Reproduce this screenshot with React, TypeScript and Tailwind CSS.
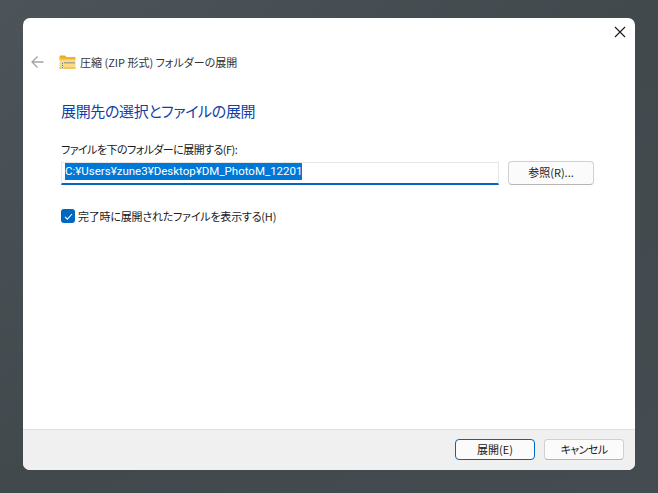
const font = { fontFamily: '"Noto Sans CJK JP", "Noto Sans", sans-serif' };

function ZipFolder() {
  return (
    <svg width="17" height="15" viewBox="0 0 17 15" className="block">
      <path d="M0.5 1.500a1 1 0 0 1 1-1h4.500l2 2h-7.500z" fill="#e9a91f" />
      <rect x="0.5" y="2" width="16" height="3" fill="#efb32c" />
      <rect x="0.5" y="4.500" width="16" height="9.500" rx="0.500" fill="#fbdc84" />
      <rect x="0.5" y="12" width="16" height="2" fill="#f2c75c" />
      <rect x="4" y="7" width="12" height="1.500" fill="#a9a48f" />
      <rect x="2" y="7" width="3" height="7" fill="#d8d8d2" />
      <rect x="3" y="8" width="1" height="1" fill="#77776f" />
      <rect x="3" y="10" width="1" height="1" fill="#77776f" />
      <rect x="3" y="12" width="1" height="1" fill="#77776f" />
    </svg>
  );
}

export default function App() {
  return (
    <div
      className="w-[658px] h-[493px] overflow-hidden pt-[18px] pl-[23px] bg-gradient-to-br from-[#4c545a] via-[#42494d] to-[#454c51] [font-feature-settings:'palt']"
      style={font}
    >
      <div className="w-[612px] h-[452px] rounded-[7px] overflow-hidden bg-white flex flex-col text-[11px] text-[#1a1a1a]">
        <div className="flex justify-end pt-[8px] pr-[9px] h-[26px]">
          <svg width="12" height="12" viewBox="0 0 12 12">
            <path d="M1 1l10 10M11 1L1 11" stroke="#1a1a1a" strokeWidth="1.100" fill="none" />
          </svg>
        </div>

        <div className="flex items-center h-[36px] pl-[8px]">
          <svg width="13" height="12" viewBox="0 0 13 12">
            <path d="M12.500 6H1M6.500 0.500L1 6l5.500 5.500" stroke="#a3a3a3" strokeWidth="1.300" fill="none" />
          </svg>
          <span className="ml-[15px]">
            <ZipFolder />
          </span>
          <span className="ml-[4px] text-[11px] leading-[16px] text-[#333]">圧縮 (ZIP 形式) フォルダーの展開</span>
        </div>

        <div className="flex-1 pl-[38px] pr-[41px]">
          <h1 className="mt-[21px] text-[15px] leading-[20px] font-normal tracking-[-0.35px] text-[#0f3fa8]">展開先の選択とファイルの展開</h1>
          <p className="mt-[20px] leading-[16px] tracking-[-0.55px]">ファイルを下のフォルダーに展開する(F):</p>
          <div className="mt-[4px] flex items-start gap-[9px]">
            <div className="mt-[1px] w-[438px] h-[23px] flex items-start pl-[3px] border border-[#e6e6e6] border-b-2 border-b-[#0067c0]">
              <span className="bg-[#0078d7] text-white text-[11.500px] leading-[17px]" style={{ fontFamily: 'Roboto, "Noto Sans CJK JP", sans-serif' }}>
                C:¥Users¥zune3¥Desktop¥DM_PhotoM_12201
              </span>
            </div>
            <button className="w-[86px] h-[24px] pb-[1px] rounded-[4px] border border-[#d0d0d0] border-b-[#b5b5b5] bg-[#fbfbfb] text-[#1a1a1a] flex items-center justify-center">
              参照(R)...
            </button>
          </div>
          <label className="mt-[23px] flex items-center">
            <span className="w-[14px] h-[14px] rounded-[3px] bg-[#0067c0] flex items-center justify-center">
              <svg width="9" height="9" viewBox="0 0 9 9">
                <path d="M1 4.800l2.300 2.300L8 2" stroke="white" strokeWidth="1.100" fill="none" />
              </svg>
            </span>
            <span className="ml-[3px] leading-[16px] tracking-[-0.2px]">完了時に展開されたファイルを表示する(H)</span>
          </label>
        </div>

        <div className="h-[41px] bg-[#f0f0f0] border-t border-[#dfdfdf] flex items-start justify-end gap-[9px] pt-[9px] pr-[11px]">
          <button className="w-[80px] h-[21px] rounded-[4px] border border-[#0067c0] bg-[#fbfbfb] flex items-center justify-center">
            展開(E)
          </button>
          <button className="w-[80px] h-[21px] rounded-[4px] border border-[#d0d0d0] border-b-[#b5b5b5] bg-[#fbfbfb] tracking-[-0.6px] flex items-center justify-center">
            キャンセル
          </button>
        </div>
      </div>
    </div>
  );
}
